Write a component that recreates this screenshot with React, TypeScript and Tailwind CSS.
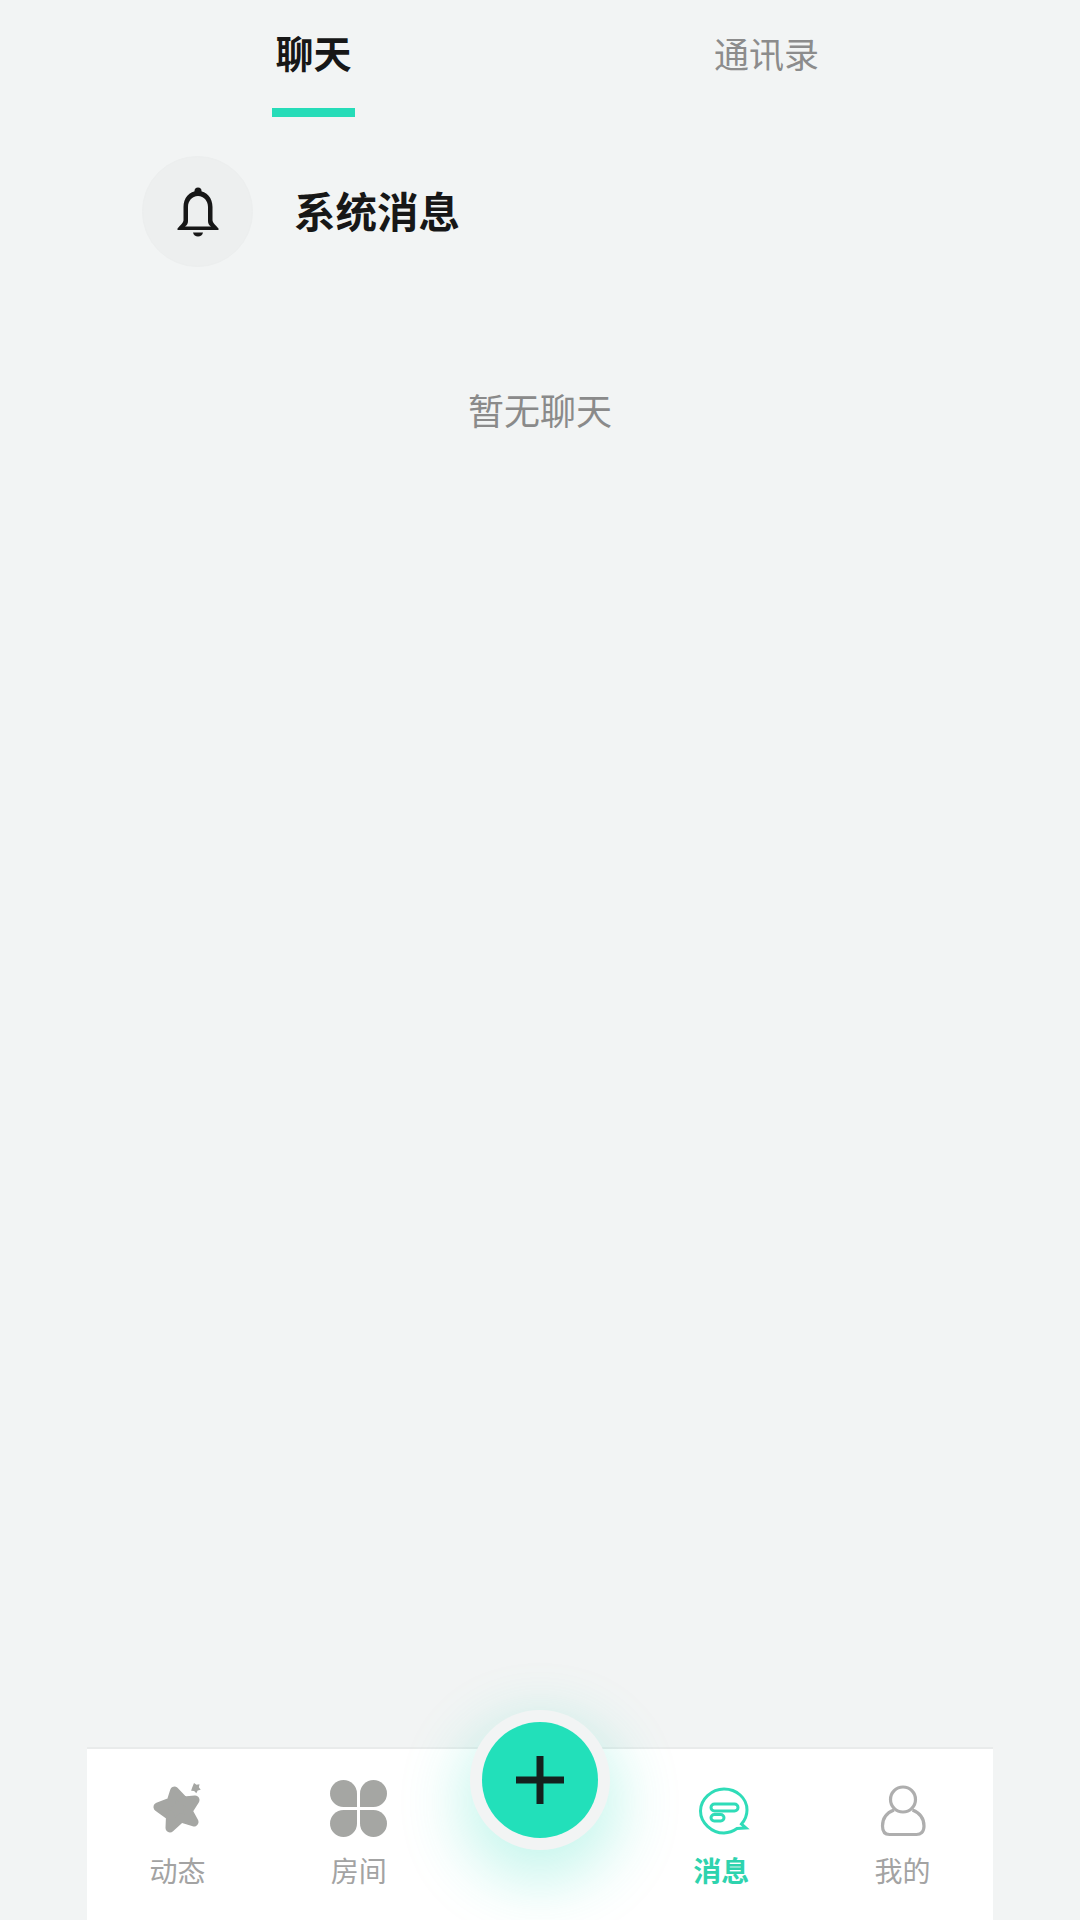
const font = { fontFamily: '"Noto Sans CJK SC", "Noto Sans", sans-serif' };

function Star() {
  return (
    <svg width="60" height="60" viewBox="0 0 60 60" className="blur-[0.7px]">
      <path
        d="M26.500 11L36 21L47 20L40 31L46 42L33 38L22 48L22.500 36L10 27L23 22Z"
        fill="#a5a6a3"
        stroke="#a5a6a3"
        strokeWidth="9"
        strokeLinejoin="round"
      />
      <path d="M46 3l2.500 1.800 3-.6-.6 3 1.800 2.500-3 .8-1.400 2.700-2.200-2.200-3-.3 1-2.900z" fill="#a5a6a3" />
    </svg>
  );
}

function Clover() {
  return (
    <svg width="60" height="60" viewBox="0 1 60 60">
      <g fill="#a5a6a3">
        <path d="M28 28H14.500A13.500 13.500 0 1 1 28 14.500z" />
        <path d="M31 28h13.500A13.500 13.500 0 1 0 31 14.500z" />
        <path d="M28 31H14.500A13.500 13.500 0 1 0 28 44.500z" />
        <path d="M31 31h13.500A13.500 13.500 0 1 1 31 44.500z" />
      </g>
    </svg>
  );
}

function Chat() {
  return (
    <svg width="60" height="60" viewBox="0 0 60 60" className="blur-[0.6px]" fill="none" stroke="#2fdcb8" strokeWidth="3">
      <path d="M33 9c12.500 0 23 9 23 21 0 5.500-2 10-5.500 14l4.500 4-9 .5A24 24 0 0 1 33 53C20.500 53 9.500 42.500 9.500 31S20.500 9 33 9z" />
      <rect x="20" y="24" width="27" height="7" rx="3.500" />
      <rect x="20" y="34.500" width="13" height="6.500" rx="3.250" />
    </svg>
  );
}

function Person() {
  return (
    <svg width="60" height="60" viewBox="0 0 60 60" className="blur-[0.7px]" fill="none" stroke="#aeaeae" strokeWidth="3.200">
      <circle cx="31" cy="19.500" r="12.500" />
      <path d="M22 30C14 33 10.500 39 10.500 46c0 6 3 8.500 7 8.500h27c4 0 7.500-2.500 7.500-8.500 0-7-4-13-11.500-16" />
    </svg>
  );
}

function Bell() {
  return (
    <svg width="44" height="52" viewBox="0 0 44 52" fill="#171717">
      <circle cx="22" cy="5" r="3.500" />
      <path
        fillRule="evenodd"
        d="M22 5c9 0 14.500 7 14.500 16V34c0 3 3 5 6 8.500V44H1.500v-1.500c3-3.500 6-5.500 6-8.500V21C7.500 12 13 5 22 5zm0 5c-6 0-10 5-10 11V35c0 2.500-1 4.500-3 5.500h26c-2-1-3-3-3-5.500V21c0-6-4-11-10-11z"
      />
      <path d="M17 46.500h10c-.5 2.500-2.500 4-5 4s-4.500-1.500-5-4z" />
    </svg>
  );
}

function NavItem({ icon, label, active }: { icon?: React.ReactNode; label?: string; active?: boolean }) {
  return (
    <div className="flex flex-col items-center pt-[31px]">
      <div className="h-[60px] w-[60px]">{icon}</div>
      {label && (
        <span
          className={
            active
              ? "mt-[13px] text-[28px] leading-[34px] font-bold text-[#2ed3ae]"
              : "mt-[13px] text-[28px] leading-[34px] text-[#a3a3a3]"
          }
        >
          {label}
        </span>
      )}
    </div>
  );
}

export default function App() {
  return (
    <div className="relative flex h-[1920px] w-[1080px] flex-col overflow-hidden bg-[#f2f4f4]" style={font}>
      <div className="mx-[87px] grid grid-cols-2">
        <div className="flex flex-col items-center pt-[26px]">
          <span className="text-[38px] leading-[52px] font-bold text-[#171717]">聊天</span>
          <div className="mt-[30px] h-[9px] w-[83px] bg-[#26dcb8]" />
        </div>
        <div className="flex flex-col items-center pt-[27px]">
          <span className="text-[35px] leading-[52px] text-[#8c8c8c]">通讯录</span>
        </div>
      </div>

      <div className="mt-[39px] flex items-center pl-[142px]">
        <div className="flex h-[111px] w-[111px] items-center justify-center rounded-full border border-[#eceeee] bg-[#edefef]">
          <Bell />
        </div>
        <span className="relative ml-[41px] -top-[2px] text-[41.5px] leading-[56px] font-bold text-[#171717]">系统消息</span>
      </div>

      <div className="mt-[114px] text-center text-[36px] leading-[56px] text-[#8a8a8a]">暂无聊天</div>

      <div className="mt-auto mx-[87px] h-[173px] border-t-2 border-[#e9ebeb] bg-white">
        <div className="grid grid-cols-5">
          <NavItem icon={<Star />} label="动态" />
          <NavItem icon={<Clover />} label="房间" />
          <div />
          <NavItem icon={<Chat />} label="消息" active />
          <NavItem icon={<Person />} label="我的" />
        </div>
      </div>

      <div className="absolute top-[1710px] left-[470px] flex h-[140px] w-[140px] items-center justify-center rounded-full bg-[#f2f4f4] shadow-[0_22px_60px_10px_rgba(38,220,184,0.26)]">
        <div className="flex h-[116px] w-[116px] items-center justify-center rounded-full bg-[#22e0ba]">
          <svg width="48" height="48" viewBox="0 0 48 48" fill="#14201e">
            <rect x="20.500" y="0" width="7" height="48" />
            <rect x="0" y="20.500" width="48" height="7" />
          </svg>
        </div>
      </div>
    </div>
  );
}
